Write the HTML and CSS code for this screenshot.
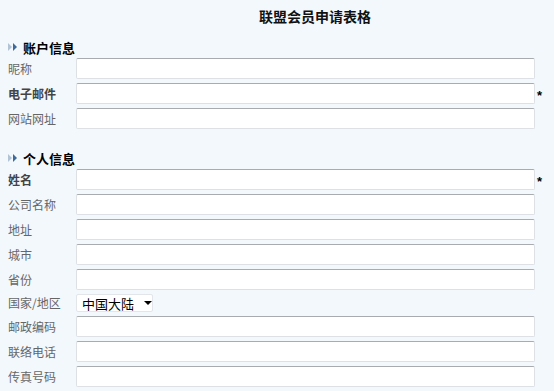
FILE: index.html
```html
<!DOCTYPE html>
<html lang="zh-CN">
<head>
<meta charset="utf-8">
<title>联盟会员申请表格</title>
<link rel="stylesheet" href="styles.css">
</head>
<body>
<div class="page">
  <h1 class="title">联盟会员申请表格</h1>

  <div class="section">
    <div class="section-head">
      <svg class="arrow" width="10" height="8" viewBox="0 0 10 8"><polygon points="0,0 4,4 0,8" fill="#b3c3d6"/><polygon points="5,0 9,4 5,8" fill="#3d6a9a"/></svg>
      <span>账户信息</span>
    </div>
    <div class="rows">
      <label class="lbl">昵称</label><input class="field" type="text"><span></span>
      <label class="lbl req">电子邮件</label><input class="field" type="text"><span class="star">*</span>
      <label class="lbl">网站网址</label><input class="field" type="text"><span></span>
    </div>
  </div>

  <div class="section second">
    <div class="section-head">
      <svg class="arrow" width="10" height="8" viewBox="0 0 10 8"><polygon points="0,0 4,4 0,8" fill="#b3c3d6"/><polygon points="5,0 9,4 5,8" fill="#3d6a9a"/></svg>
      <span>个人信息</span>
    </div>
    <div class="rows">
      <label class="lbl req">姓名</label><input class="field" type="text"><span class="star">*</span>
      <label class="lbl">公司名称</label><input class="field" type="text"><span></span>
      <label class="lbl">地址</label><input class="field" type="text"><span></span>
      <label class="lbl">城市</label><input class="field" type="text"><span></span>
      <label class="lbl">省份</label><input class="field" type="text"><span></span>
      <label class="lbl short">国家/地区</label><div class="select-row"><span class="select">中国大陆<i class="caret"></i></span></div><span></span>
      <label class="lbl">邮政编码</label><input class="field" type="text"><span></span>
      <label class="lbl">联络电话</label><input class="field" type="text"><span></span>
      <label class="lbl">传真号码</label><input class="field" type="text"><span></span>
    </div>
  </div>
</div>
</body>
</html>
```

FILE: styles.css
```css
html, body {
  margin: 0;
  padding: 0;
  background: #f3f8fd;
}
body {
  width: 554px;
  height: 391px;
  overflow: hidden;
  font-family: "Noto Sans CJK SC", "Noto Sans", sans-serif;
}
.page {
  padding-left: 8px;
}
.title {
  margin: 0 0 0 68px;
  height: 32px;
  line-height: 32px;
  text-align: center;
  font-size: 14px;
  font-weight: bold;
  color: #111;
}
.section {
  margin-top: 7px;
}
.section.second {
  margin-top: 21px;
}
.section-head {
  display: flex;
  align-items: center;
  height: 16px;
  margin-bottom: 3px;
  font-size: 13px;
  font-weight: bold;
  color: #000;
}
.arrow {
  margin-right: 5px;
}
.rows {
  display: grid;
  grid-template-columns: 68px 459px 18px;
  grid-auto-rows: auto;
  row-gap: 4px;
  align-items: center;
}
.lbl {
  font-size: 12px;
  color: #666;
  line-height: 21px;
}
.lbl.short {
  line-height: 18px;
}
.lbl.req {
  color: #444;
  font-weight: bold;
}
.field {
  box-sizing: border-box;
  width: 459px;
  height: 21px;
  margin: 0;
  padding: 0 3px;
  background: #fff;
  border: 1px solid #dde1e6;
  border-top-color: #a8acb1;
  border-radius: 2px;
  outline: none;
}
.star {
  padding-left: 2px;
  font-family: "Liberation Sans", sans-serif;
  font-size: 13px;
  font-weight: bold;
  color: #000;
  line-height: 21px;
  position: relative;
  top: 2px;
}
.select-row {
  height: 18px;
  display: flex;
  align-items: center;
}
.select {
  box-sizing: border-box;
  display: inline-flex;
  align-items: center;
  width: 77px;
  height: 18px;
  padding-left: 5px;
  background: #fff;
  border: 1px solid #e2e5e9;
  border-radius: 2px;
  font-size: 13px;
  color: #000;
}
.caret {
  margin-left: 10px;
  width: 0;
  height: 0;
  border-left: 4px solid transparent;
  border-right: 4px solid transparent;
  border-top: 4px solid #000;
}
```
